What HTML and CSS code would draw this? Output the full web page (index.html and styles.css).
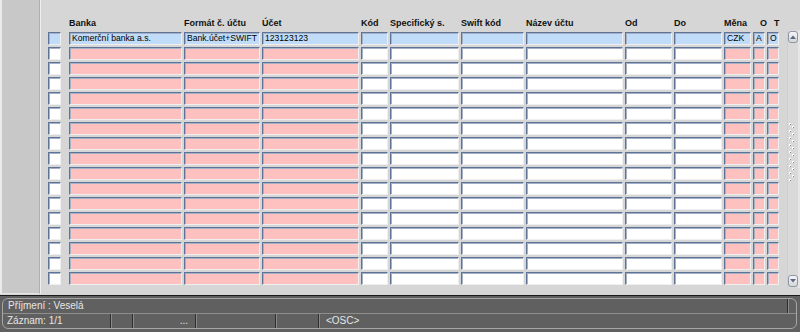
FILE: index.html
```html
<!DOCTYPE html>
<html lang="cs">
  <head>
    <meta charset="UTF-8" />
    <title>Bankovní účty</title>
    <link rel="stylesheet" href="styles.css">
  </head>
  <body>
    <div class="workspace">
      <div class="side-panel"></div>

      <div class="form">
        <div class="grid-head">
          <div class="col col-chk"></div>
          <div class="col col-bank">Banka</div>
          <div class="col col-format">Formát č. účtu</div>
          <div class="col col-account">Účet</div>
          <div class="col col-code">Kód</div>
          <div class="col col-spec">Specifický s.</div>
          <div class="col col-swift">Swift kód</div>
          <div class="col col-name">Název účtu</div>
          <div class="col col-from">Od</div>
          <div class="col col-to">Do</div>
          <div class="col col-cur">Měna</div>
          <div class="col col-o flag">O</div>
          <div class="col col-t flag">T</div>
        </div>
        <div class="grid-body" id="grid-body"></div>
      </div>

      <div class="scrollbar">
        <div class="scroll-btn">
          <svg width="8" height="6" viewBox="0 0 8 6"><path d="M1 5 L4 1.5 L7 5 Z" fill="#5c6883"/></svg>
        </div>
        <div class="scroll-track">
          <svg class="grip" width="8" height="60" viewBox="0 0 8 60">
            <defs>
              <pattern id="dots" width="8" height="7" patternUnits="userSpaceOnUse">
                <rect x="1" y="1" width="2" height="2" fill="#ffffff"/>
                <rect x="2" y="2" width="1" height="1" fill="#888888"/>
                <rect x="4" y="4" width="2" height="2" fill="#ffffff"/>
                <rect x="5" y="5" width="1" height="1" fill="#888888"/>
              </pattern>
            </defs>
            <rect width="8" height="60" fill="url(#dots)"/>
          </svg>
        </div>
        <div class="scroll-btn">
          <svg width="8" height="6" viewBox="0 0 8 6"><path d="M1 1 L4 4.5 L7 1 Z" fill="#5c6883"/></svg>
        </div>
      </div>
    </div>

    <div class="status">
      <div class="status-box">
        <div class="status-line">
          <span class="status-text">Příjmení : Veselá</span>
          <span class="status-end"></span>
        </div>
        <div class="status-line">
          <span class="status-cell cell-record">Záznam: 1/1</span>
          <span class="status-cell cell-a"></span>
          <span class="status-cell cell-more">...</span>
          <span class="status-cell cell-b"></span>
          <span class="status-cell cell-c"></span>
          <span class="status-cell cell-mode">&lt;OSC&gt;</span>
        </div>
      </div>
    </div>

    <script>
      // Column order and the colour of the empty rows
      const columns = [
        ['col-chk', 'plain'],
        ['col-bank', 'required'],
        ['col-format', 'required'],
        ['col-account', 'required'],
        ['col-code', 'plain'],
        ['col-spec', 'plain'],
        ['col-swift', 'plain'],
        ['col-name', 'plain'],
        ['col-from', 'plain'],
        ['col-to', 'plain'],
        ['col-cur', 'required'],
        ['col-o', 'required'],
        ['col-t', 'required'],
      ];

      // The one record we have
      const record = {
        'col-bank': 'Komerční banka a.s.',
        'col-format': 'Bank.účet+SWIFT',
        'col-account': '123123123',
        'col-cur': 'CZK',
        'col-o': 'A',
        'col-t': 'O',
      };

      const body = document.getElementById('grid-body');

      for (let i = 0; i < 17; i++) {
        const row = document.createElement('div');
        row.className = 'grid-row';

        columns.forEach(([col, kind]) => {
          const cell = document.createElement('div');
          cell.className = 'cell col ' + col + ' ' + (i === 0 ? 'current' : kind);
          if (i === 0 && record[col]) {
            cell.textContent = record[col];
          }
          row.appendChild(cell);
        });

        body.appendChild(row);
      }
    </script>
  </body>
</html>
```

FILE: styles.css
```css
body {
  margin: 0;
  width: 800px;
  height: 332px;
  overflow: hidden;
  background: #d6d6d6;
  font-family: 'Liberation Sans', Arial, sans-serif;
  display: flex;
  flex-direction: column;
}

.workspace {
  height: 295px;
  display: flex;
}

.side-panel {
  width: 37px;
  height: 293px;
  background: #c8c8c8;
  border-left: 2px solid #ebebeb;
  border-right: 1px solid #a7b0c0;
  border-bottom: 1px solid #e4e4e4;
  box-shadow: 1px 0 0 #eeeeee;
}

.form {
  flex: 1;
  padding: 18px 0 0 8px;
}

.grid-head {
  display: flex;
  gap: 2px;
  height: 11px;
  line-height: 11px;
  margin-bottom: 3px;
  font-size: 9px;
  font-weight: bold;
  color: #111;
  white-space: nowrap;
}

.grid-head .flag {
  padding-left: 7px;
  box-sizing: border-box;
}

.grid-body {
  display: flex;
  flex-direction: column;
  gap: 2px;
}

.grid-row {
  display: flex;
  gap: 2px;
}

.col {
  flex: none;
}

.col-chk { width: 13px; margin-right: 6px; }
.col-bank { width: 113px; }
.col-format { width: 76px; }
.col-account { width: 97px; }
.col-code { width: 27px; }
.col-spec { width: 69px; }
.col-swift { width: 63px; }
.col-name { width: 97px; }
.col-from { width: 47px; }
.col-to { width: 48px; }
.col-cur { width: 27px; }
.col-o { width: 12px; }
.col-t { width: 12px; }

.cell {
  height: 13px;
  box-sizing: border-box;
  border-top: 1px solid #5f7397;
  border-left: 1px solid #5f7397;
  border-right: 1px solid #efefef;
  border-bottom: 1px solid #efefef;
  box-shadow: inset 1px 1px 0 #a3b0c6;
  padding-left: 2px;
  font-size: 8.6px;
  line-height: 11px;
  color: #000;
  white-space: nowrap;
  overflow: hidden;
}

.cell.plain {
  background: #ffffff;
}

.cell.required {
  background: #ffc0c0;
}

.cell.current {
  background: #c0dcf8;
}

.scrollbar {
  width: 13px;
  height: 258px;
  margin-top: 30px;
  box-sizing: border-box;
  background: #d9d9d9;
  border-left: 1px solid #cfcfcf;
  border-right: 2px solid #e6e6e6;
  display: flex;
  flex-direction: column;
  justify-content: space-between;
  padding: 1px 0;
}

.scroll-btn {
  width: 10px;
  height: 12px;
  box-sizing: border-box;
  border: 1px solid #8d96a8;
  border-radius: 3px;
  background: linear-gradient(#f6f6f6, #d6d6d6);
  display: flex;
  align-items: center;
  justify-content: center;
}

.scroll-track {
  flex: 1;
  display: flex;
  align-items: center;
  justify-content: center;
  padding: 0 2px 14px 0;
}

.grip {
  display: block;
}

.status {
  flex: 1;
  background: #606060;
  border-top: 1px solid #1c1c1c;
  padding: 2px 3px 3px 2px;
}

.status-box {
  border: 1px solid #a6a6a6;
  border-radius: 6px;
  color: #e6e6e6;
  font-size: 10px;
  line-height: 14px;
}

.status-line {
  height: 14px;
  display: flex;
}

.status-line:first-child {
  border-bottom: 1px solid #8e8e8e;
}

.status-text {
  flex: 1;
  padding-left: 5px;
}

.status-end {
  width: 6px;
  border-left: 1px solid #2e2e2e;
  box-shadow: inset 1px 0 0 #8a8a8a;
  margin-right: 2px;
}

.status-cell {
  box-sizing: border-box;
  white-space: nowrap;
}

.status-cell + .status-cell {
  border-left: 1px solid #2e2e2e;
  box-shadow: inset 1px 0 0 #8a8a8a;
}

.cell-record { width: 107px; padding-left: 4px; }
.cell-a { width: 22px; }
.cell-more { width: 63px; text-align: right; padding-right: 7px; }
.cell-b { width: 80px; }
.cell-c { width: 43px; }
.cell-mode { flex: 1; padding-left: 7px; }
```
